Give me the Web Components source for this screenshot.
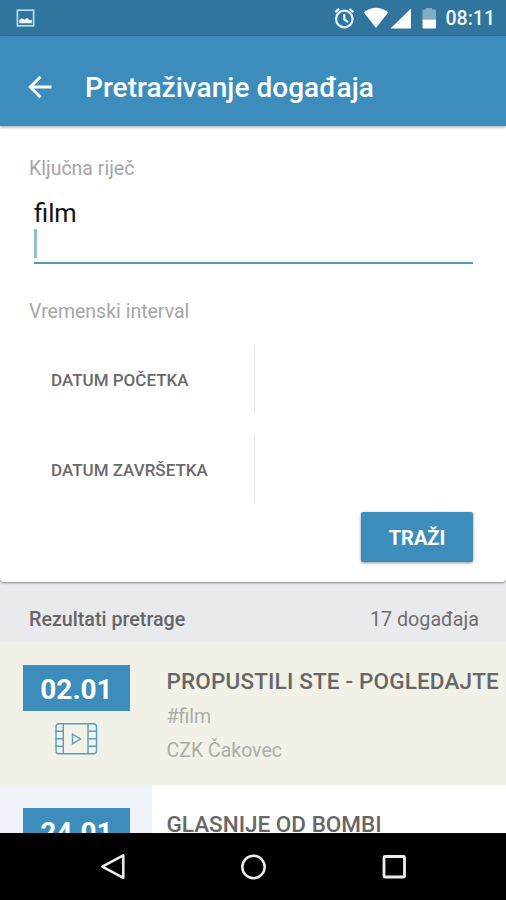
<!DOCTYPE html>
<html lang="hr">
<head>
<meta charset="utf-8">
<title>Pretraživanje događaja</title>
<style>
  body { margin: 0; width: 506px; height: 900px; overflow: hidden; background: #e9eaee; font-family: Roboto, "Liberation Sans", sans-serif; }
</style>
</head>
<body>
<event-app></event-app>
<script>
const define = (name, html) => {
  const tpl = document.createElement('template');
  tpl.innerHTML = html;
  customElements.define(name, class extends HTMLElement {
    constructor() {
      super();
      this.attachShadow({ mode: 'open' }).append(tpl.content.cloneNode(true));
    }
  });
};

define('status-bar', `
<style>
  :host { display: flex; align-items: center; height: 36px; box-sizing: border-box; background: #2f759d; color: #f2f8fb; padding: 0 11px 0 16px; }
  svg { display: block; flex: none; }
  .gap { flex: 1; }
  .time { font-size: 19.5px; font-weight: 500; line-height: 36px; margin-top: 2px; margin-left: 9px; }
</style>
<svg width="19" height="36" viewBox="16 0 19 36"><rect x="17.4" y="10.2" width="16.2" height="15.6" fill="none" stroke="#b9dbea" stroke-width="1.7"/><path d="M19.3 23.300v-3.300l2.600-1.800 2.400 1.500 3-1.800 2 2h2.500v3.400z" fill="#fff"/></svg>
<span class="gap"></span>
<svg width="107" height="36" viewBox="330 0 107 36">
  <g fill="none" stroke="#e6f2f7" stroke-width="2.200"><circle cx="344.300" cy="19" r="8.300"/><path d="M344.300 14v5.500l3.800 2.600M335.200 12.200l4-3.300M353.400 12.200l-4-3.300"/></g>
  <path d="M363.700 12.200q12.300-9 24.600 0L376 28z" fill="#fff"/>
  <path d="M390.500 28.500L411 8.500v20z" fill="#fff"/>
  <path d="M422.500 19.500V10.500q0-1 1-1h2.500V8h6v1.500h3q1 0 1 1v9z" fill="#7fadc6"/>
  <path d="M422.500 19.500h13.500v8q0 1-1 1h-11.500q-1 0-1-1z" fill="#fff"/>
</svg>
<span class="time">08:11</span>`);

define('app-bar', `
<style>
  :host { display: flex; align-items: center; height: 90px; box-sizing: border-box; padding: 13px 0 0 27px; background: #3c8dbc; color: #fff; box-shadow: 0 1px 3px rgba(0,0,0,.4); position: relative; }
  svg { margin: -2px 31px 0 0; display: block; }
  .t { font-size: 28px; font-weight: 500; line-height: 36px; white-space: nowrap; letter-spacing: .04px; }
</style>
<svg width="27" height="26" viewBox="0 0 27 26" fill="none" stroke="#fff" stroke-width="2.900"><path d="M24.500 13H3.500M13.500 2.700L3.300 13l10.200 10.300"/></svg>
<span class="t"><slot></slot></span>`);

define('field-label', `
<style>:host { display: block; font-size: 19.500px; line-height: 24px; color: #a6a6a6; white-space: nowrap; }</style><slot></slot>`);

define('text-field', `
<style>
  :host { display: flex; flex-direction: column; height: 66px; box-sizing: border-box; border-bottom: 2px solid #559bb9; color: #111; font-size: 25.500px; line-height: 30px; }
  .caret { width: 3px; height: 29px; background: #93bed2; margin-top: 1px; }
</style>
<span><slot></slot></span><span class="caret"></span>`);

define('date-row', `
<style>
  :host { display: flex; align-items: center; height: 67px; width: 226px; box-sizing: border-box; border-right: 1px solid #e4e4e4; padding: 0 0 0 22px; font-size: 17px; font-weight: 500; color: #6a6a6a; white-space: nowrap; }
</style><span><slot></slot></span>`);

define('search-button', `
<style>
  :host { display: flex; align-items: center; justify-content: center; width: 112px; height: 50px; border-radius: 2px; background: #3c8dbc; color: #fff; font-size: 20px; font-weight: 700; box-shadow: 0 1px 3px rgba(0,0,0,.45); }
  span { margin-top: 2px; }
</style><span><slot></slot></span>`);

define('search-card', `
<style>
  :host { display: flex; flex-direction: column; box-sizing: border-box; height: 456px; padding: 31px 33px 0 29px; background: #fff; border-radius: 0 0 4px 4px; box-shadow: 0 1px 2px rgba(0,0,0,.45); }
  text-field { margin: 17px 0 36px 5px; }
  date-row { margin-top: 23px; }
  field-label + date-row { margin-top: 22px; }
  search-button { align-self: flex-end; margin-top: 9px; }
</style>
<field-label>Ključna riječ</field-label>
<text-field>film</text-field>
<field-label>Vremenski interval</field-label>
<date-row>DATUM POČETKA</date-row>
<date-row>DATUM ZAVRŠETKA</date-row>
<search-button>TRAŽI</search-button>`);

define('results-header', `
<style>
  :host { display: flex; justify-content: space-between; align-items: center; height: 60px; box-sizing: border-box; padding: 14px 27px 0 29px; color: #6f6f6f; font-size: 19.700px; white-space: nowrap; }
  b { font-weight: 500; color: #666; }
</style>
<b><slot></slot></b><slot name="count"></slot>`);

define('film-icon', `
<style>:host { display: block; width: 44px; height: 34px; } svg { display: block; }</style>
<svg width="44" height="34" viewBox="0 0 44 34" fill="none" stroke="#5b9ec2" stroke-width="1.400">
<rect x="2" y="1.700" width="40.500" height="30" rx="3"/><path d="M9.300 1.700v30M34 1.700v30M1.500 9.300h7.800M1.500 16.800h7.800M1.500 24.300h7.800M34 9.300h8.500M34 16.800h8.500M34 24.300h8.500"/><path d="M18.500 12.200v9.600l8-4.800z"/></svg>`);

define('event-item', `
<style>
  :host { display: flex; height: 143px; box-sizing: border-box; background: #fff; }
  .side { width: 152px; box-sizing: border-box; flex: none; background: #eff2f8; padding: 23px 0 0 23px; }
  :host([past]), :host([past]) .side { background: #f1f1e8; }
  :host([past]) .title { letter-spacing: .16px; }
  .date { width: 107px; height: 46px; background: #3c8dbc; color: #fff; font-weight: 700; font-size: 28px; line-height: 49px; text-align: center; }
  film-icon { margin: 11px 0 0 31px; }
  .body { padding: 22px 0 0 14.500px; white-space: nowrap; color: #adada8; font-size: 19.500px; line-height: 34px; overflow: hidden; }
  .title { color: #676767; font-size: 22.500px; font-weight: 500; line-height: 34px; margin-bottom: 2px; }
</style>
<div class="side"><div class="date"><slot name="date"></slot></div><film-icon></film-icon></div>
<div class="body"><div class="title"><slot></slot></div><div><slot name="tag"></slot></div><div><slot name="place"></slot></div></div>`);

define('event-list', `
<style>:host { display: flex; flex-direction: column; height: 191px; overflow: hidden; } ::slotted(*) { flex: none; }</style><slot></slot>`);

define('nav-bar', `
<style>
  :host { display: flex; align-items: center; height: 67px; padding: 0 97px 0 99px; background: #000; justify-content: space-between; }
  svg { display: block; }
</style>
<svg width="30" height="30" viewBox="0 0 30 30" fill="none" stroke="#eee" stroke-width="2.500" stroke-linejoin="round"><path d="M24.300 3.300v22.500L3.300 14.600z"/></svg>
<svg width="30" height="30" viewBox="0 0 30 30" fill="none" stroke="#eee" stroke-width="2.500"><circle cx="14.500" cy="15" r="11.200"/></svg>
<svg width="30" height="30" viewBox="0 0 30 30" fill="none" stroke="#eee" stroke-width="2.800"><rect x="5" y="4.500" width="20.500" height="20.500" rx="1"/></svg>`);

define('event-app', `
<style>:host { display: flex; flex-direction: column; width: 506px; height: 900px; overflow: hidden; } :host > * { flex: none; }</style>
<status-bar></status-bar>
<app-bar>Pretraživanje događaja</app-bar>
<search-card></search-card>
<results-header>Rezultati pretrage<span slot="count">17 događaja</span></results-header>
<event-list>
  <event-item past><span slot="date">02.01</span>PROPUSTILI STE - POGLEDAJTE<span slot="tag">#film</span><span slot="place">CZK Čakovec</span></event-item>
  <event-item><span slot="date">24.01</span>GLASNIJE OD BOMBI</event-item>
</event-list>
<nav-bar></nav-bar>`);
</script>
</body>
</html>
